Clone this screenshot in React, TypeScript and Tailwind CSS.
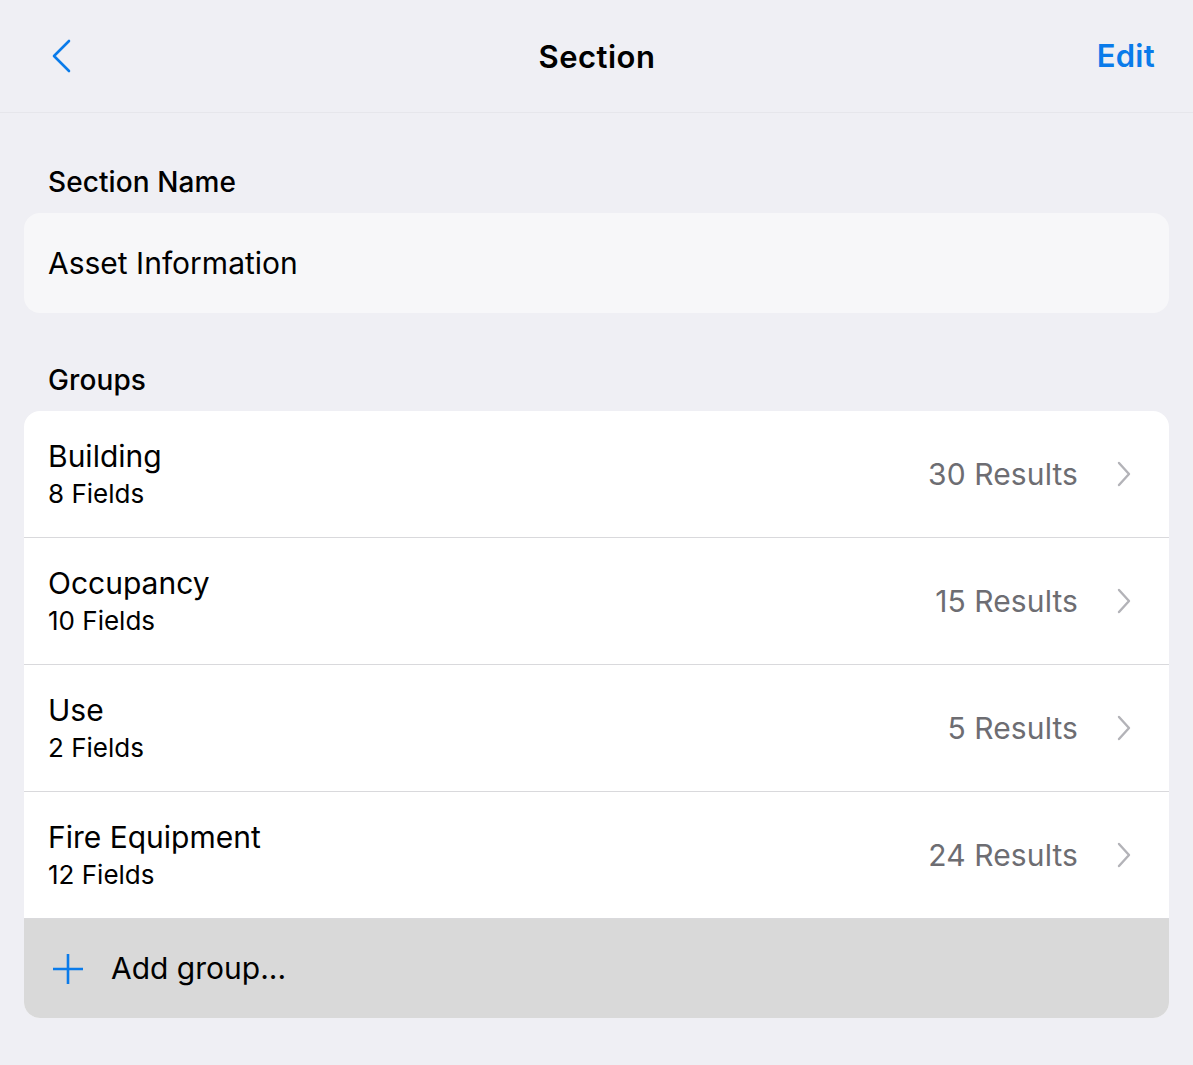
const groups = [
  { name: 'Building', fields: '8 Fields', results: '30 Results' },
  { name: 'Occupancy', fields: '10 Fields', results: '15 Results' },
  { name: 'Use', fields: '2 Fields', results: '5 Results' },
  { name: 'Fire Equipment', fields: '12 Fields', results: '24 Results' },
]

export default function App() {
  return (
    <div className="min-h-[1065px] w-[1193px] bg-[#efeff4] font-['Inter','Noto_Sans',sans-serif] text-black antialiased">
      {/* nav bar */}
      <div className="grid h-[113px] grid-cols-[1fr_auto_1fr] items-center border-b border-[#e6e6eb] pl-[39px] pr-[38px]">
        <button className="flex h-12 w-12 items-center pl-[12px]">
          <svg width="20" height="34" viewBox="0 0 20 34" fill="none">
            <path d="M18 2 L3 17 L18 32" stroke="#0a7bea" strokeWidth="2.6" strokeLinecap="round" strokeLinejoin="round" />
          </svg>
        </button>
        <h1 className="pt-[2px] text-[31px] font-semibold tracking-[0.5px]">Section</h1>
        <button className="justify-self-end text-[31px] font-semibold tracking-[0.3px] text-[#0a7bea]">Edit</button>
      </div>

      <div className="px-[24px]">
        <p className="pl-[24px] pt-[52px] pb-[14px] text-[28px] font-medium leading-[34px] tracking-[0.1px]">Section Name</p>
        <div className="flex h-[100px] items-center rounded-[16px] bg-[#f7f7f9] px-[24px]">
          <span className="text-[30px]">Asset Information</span>
        </div>

        <p className="pl-[24px] pt-[50px] pb-[14px] text-[28px] font-medium leading-[34px] tracking-[0.1px]">Groups</p>
        <div className="overflow-hidden rounded-[16px] bg-white">
          {groups.map((g) => (
            <div key={g.name} className="flex h-[127px] items-center border-b border-[#d9d9dc] pl-[24px] pr-[37px]">
              <div className="flex-1">
                <div className="text-[30px] leading-[40px]">{g.name}</div>
                <div className="text-[26px] leading-[36px]">{g.fields}</div>
              </div>
              <span className="mr-[38px] text-[30px] tracking-[0.1px] text-[#6d6d72]">{g.results}</span>
              <svg width="16" height="28" viewBox="0 0 16 28" fill="none">
                <path d="M3 3 L13 14 L3 25" stroke="#b3b3b8" strokeWidth="2.4" strokeLinecap="round" strokeLinejoin="round" />
              </svg>
            </div>
          ))}
          <div className="flex h-[99px] items-center bg-[#d9d9d9] pl-[28px]">
            <svg width="32" height="32" viewBox="0 0 32 32" fill="none">
              <path d="M16 1 V31 M1 16 H31" stroke="#0a7bea" strokeWidth="2.6" />
            </svg>
            <span className="ml-[27px] text-[30px]">Add group...</span>
          </div>
        </div>
      </div>
    </div>
  )
}
